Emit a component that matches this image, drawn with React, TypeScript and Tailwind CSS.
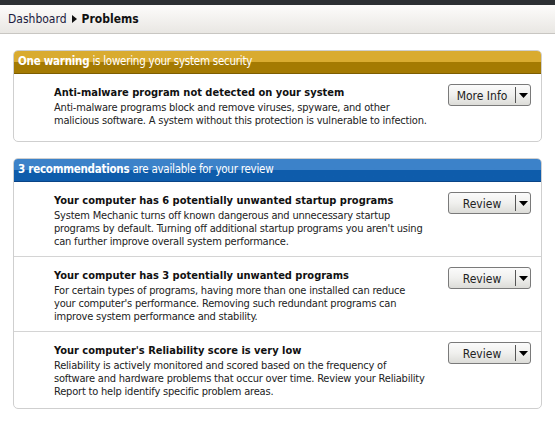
import React from 'react';

type Item = {
  title: string;
  text: string[];
  action: string;
};

const warnings: Item[] = [
  {
    title: 'Anti-malware program not detected on your system',
    text: [
      'Anti-malware programs block and remove viruses, spyware, and other',
      'malicious software. A system without this protection is vulnerable to infection.',
    ],
    action: 'More Info',
  },
];

const recommendations: Item[] = [
  {
    title: 'Your computer has 6 potentially unwanted startup programs',
    text: [
      'System Mechanic turns off known dangerous and unnecessary startup',
      "programs by default. Turning off additional startup programs you aren't using",
      'can further improve overall system performance.',
    ],
    action: 'Review',
  },
  {
    title: 'Your computer has 3 potentially unwanted programs',
    text: [
      'For certain types of programs, having more than one installed can reduce',
      "your computer's performance. Removing such redundant programs can",
      'improve system performance and stability.',
    ],
    action: 'Review',
  },
  {
    title: "Your computer's Reliability score is very low",
    text: [
      'Reliability is actively monitored and scored based on the frequency of',
      'software and hardware problems that occur over time. Review your Reliability',
      'Report to help identify specific problem areas.',
    ],
    action: 'Review',
  },
];

function SplitButton({ label }: { label: string }) {
  return (
    <button className="-mt-[2px] flex h-[22px] w-[83px] shrink-0 items-stretch rounded-[3px] border border-[#7a7a7a] bg-gradient-to-b from-[#fbfbfb] via-[#f0f0ee] to-[#dcdcd8] text-[12px] text-[#222]">
      <span className="flex flex-1 items-center justify-center pt-px">{label}</span>
      <span className="my-[2px] w-px bg-[#555]" />
      <span className="flex w-[14px] items-center justify-center">
        <svg width="9" height="5" viewBox="0 0 9 5">
          <path d="M0 0h9L4.5 5z" fill="#000" />
        </svg>
      </span>
    </button>
  );
}

function Row({ item, last, minH }: { item: Item; last: boolean; minH?: boolean }) {
  return (
    <div
      className={`flex items-start pl-[40px] pr-[10px] pt-[12px] ${last ? 'pb-[10px]' : 'pb-[8px] border-b border-[#d4d4d4]'} ${minH ? 'min-h-[67px]' : ''}`}
    >
      <div className="flex-1">
        <div className="mb-[2px] text-[11px] font-bold leading-[13px] text-[#111]">{item.title}</div>
        {item.text.map((line) => (
          <div key={line} className="whitespace-nowrap text-[11px] leading-[13px] tracking-[-0.2px] text-[#222]">
            {line}
          </div>
        ))}
      </div>
      <SplitButton label={item.action} />
    </div>
  );
}

function Panel({
  tone,
  strong,
  rest,
  items,
}: {
  tone: 'gold' | 'blue';
  strong: string;
  rest: string;
  items: Item[];
}) {
  const header =
    tone === 'gold'
      ? 'bg-gradient-to-b from-[#d9ab30] from-50% to-[#a47a02] to-50% border-b border-[#7d5d00]'
      : 'bg-gradient-to-b from-[#3c82c9] from-50% to-[#0e5cab] to-50% border-b border-[#0a4486]';
  return (
    <div className="overflow-hidden rounded-[5px] border border-[#cfcfcf] bg-white">
      <div className={`flex h-[23px] items-center px-[4px] text-[11.5px] tracking-[-0.25px] text-white ${header}`}>
        <span className="font-bold">{strong}</span>
        <span>&nbsp;{rest}</span>
      </div>
      {items.map((item, i) => (
        <Row key={item.title} item={item} last={i === items.length - 1} minH={tone === 'gold'} />
      ))}
    </div>
  );
}

export default function App() {
  return (
    <div
      className="min-h-[435px] w-[555px] bg-white"
      style={{ fontFamily: '"DejaVu Sans Condensed", "DejaVu Sans", sans-serif' }}
    >
      <div className="h-[5px] bg-[#2d3033]" />
      <div className="flex h-[29px] items-center gap-[5px] border-b border-[#c8c6c2] bg-gradient-to-b from-[#fdfcfb] to-[#e9e7e3] px-[8px] text-[12px] text-[#1a1a40]">
        <span>Dashboard</span>
        <svg width="5" height="8" viewBox="0 0 5 8">
          <path d="M0 0l5 4-5 4z" fill="#111" />
        </svg>
        <span className="font-bold text-[#111]">Problems</span>
      </div>
      <div className="flex flex-col gap-[16px] px-[13px] pt-[16px]">
        <Panel tone="gold" strong="One warning" rest="is lowering your system security" items={warnings} />
        <Panel
          tone="blue"
          strong="3 recommendations"
          rest="are available for your review"
          items={recommendations}
        />
      </div>
    </div>
  );
}
